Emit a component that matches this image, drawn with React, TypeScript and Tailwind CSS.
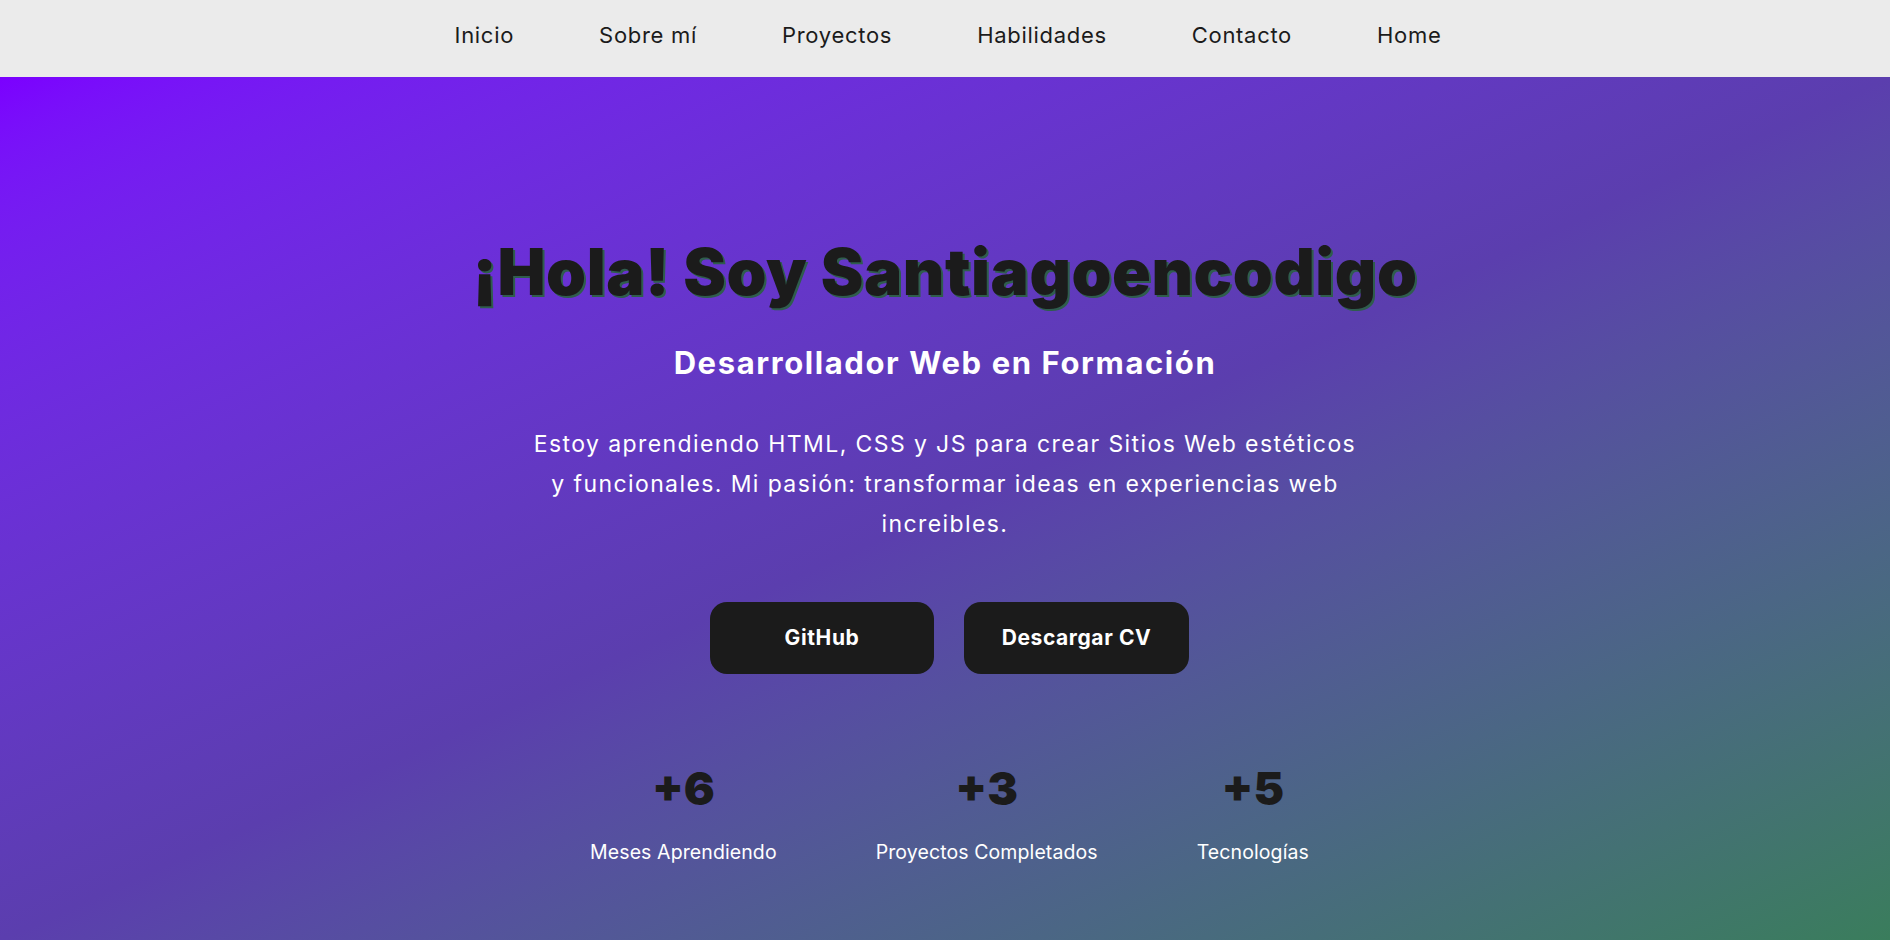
import React from "react";

const links = ["Inicio", "Sobre mí", "Proyectos", "Habilidades", "Contacto", "Home"];

const stats = [
  { value: "+6", label: "Meses Aprendiendo" },
  { value: "+3", label: "Proyectos Completados" },
  { value: "+5", label: "Tecnologías" },
];

export default function App() {
  return (
    <div className="min-h-screen font-['Inter',sans-serif] text-[#1b1b1b]">
      <nav className="h-[77px] bg-[#ebebeb] flex items-center justify-center gap-[85px] pb-[6px] pl-[6px]">
        {links.map((l) => (
          <a key={l} href="#" className="text-[22px] tracking-[0.7px] text-[#1b1b1b]">
            {l}
          </a>
        ))}
      </nav>

      <section className="min-h-[863px] bg-gradient-to-br from-[#7b00ff] via-[#5b3eae] to-[#3a7d5c] flex flex-col items-center pt-[159px] pb-16">
        <h1 className="text-[64px] leading-[72px] font-black tracking-[0.6px] text-[#1b1b1b] [text-shadow:2px_2px_0px_#2f5d4d]">
          ¡Hola! Soy Santiagoencodigo
        </h1>
        <h2 className="mt-[37px] text-[31px] leading-[36px] font-bold tracking-[1.6px] text-white">
          Desarrollador Web en Formación
        </h2>
        <p className="mt-[43px] text-[23px] leading-[40px] tracking-[1.4px] text-white text-center">
          Estoy aprendiendo HTML, CSS y JS para crear Sitios Web estéticos
          <br />
          y funcionales. Mi pasión: transformar ideas en experiencias web
          <br />
          increibles.
        </p>

        <div className="mt-[58px] ml-[9px] flex gap-[30px]">
          <a href="#" className="w-[224px] h-[72px] rounded-[17px] bg-[#1b1b1b] text-white text-[21px] tracking-[0.6px] font-bold flex items-center justify-center">
            GitHub
          </a>
          <a href="#" className="w-[225px] h-[72px] rounded-[17px] bg-[#1b1b1b] text-white text-[21px] tracking-[0.6px] font-bold flex items-center justify-center">
            Descargar CV
          </a>
        </div>

        <div className="mt-[90px] ml-[9px] flex gap-[99px]">
          {stats.map((s) => (
            <div key={s.label} className="flex flex-col items-center">
              <span className="text-[46px] leading-[48px] font-black text-[#1b1b1b]">{s.value}</span>
              <span className="mt-[26px] text-[19.5px] leading-[28px] tracking-[0.1px] text-white">{s.label}</span>
            </div>
          ))}
        </div>
      </section>
    </div>
  );
}
